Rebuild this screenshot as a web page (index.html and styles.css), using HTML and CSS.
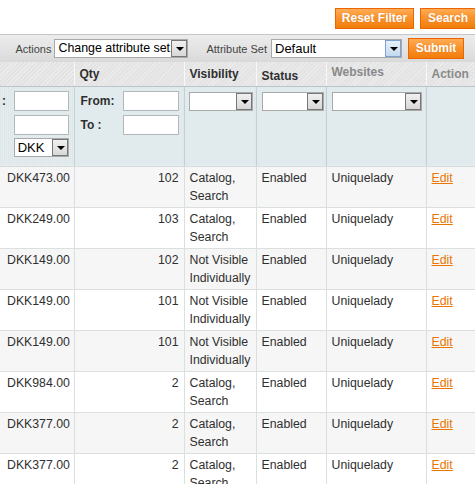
FILE: index.html
```html
<!DOCTYPE html>
<html>
<head>
<meta charset="utf-8">
<link rel="stylesheet" href="styles.css">
</head>
<body>
<div class="page">
  <div class="topbar">
    <button class="btn btn-reset">Reset Filter</button>
    <button class="btn btn-search">Search</button>
  </div>
  <div class="massaction">
    <span class="ma-label">Actions</span>
    <span class="sel sel-actions"><span class="sel-text">Change attribute set</span><span class="arrow"></span></span>
    <span class="ma-label ma-label-set">Attribute Set</span>
    <span class="sel sel-set"><span class="sel-text">Default</span><span class="arrow arrow-hot"></span></span>
    <button class="btn btn-submit">Submit</button>
  </div>
  <table class="grid">
    <colgroup>
      <col class="c-price"><col class="c-qty"><col class="c-vis"><col class="c-status"><col class="c-web"><col class="c-action">
    </colgroup>
    <thead>
      <tr class="headings">
        <th></th>
        <th>Qty</th>
        <th>Visibility</th>
        <th><span class="th-status">Status</span></th>
        <th class="th-muted"><span class="th-web">Websites</span></th>
        <th class="th-muted">Action</th>
      </tr>
      <tr class="filter">
        <th>
          <div class="range">
            <div class="range-row"><span class="range-label price-label">:</span><span class="inp"></span></div>
            <div class="range-row"><span class="range-label price-label"></span><span class="inp"></span></div>
            <div class="range-row"><span class="range-label price-label"></span><span class="sel sel-cur"><span class="sel-text">DKK</span><span class="arrow"></span></span></div>
          </div>
        </th>
        <th>
          <div class="range">
            <div class="range-row"><span class="range-label qty-label">From:</span><span class="inp"></span></div>
            <div class="range-row"><span class="range-label qty-label">To :</span><span class="inp"></span></div>
          </div>
        </th>
        <th><span class="sel sel-vis"><span class="sel-text"></span><span class="arrow"></span></span></th>
        <th><span class="sel sel-status"><span class="sel-text"></span><span class="arrow"></span></span></th>
        <th><span class="sel sel-web"><span class="sel-text"></span><span class="arrow"></span></span></th>
        <th></th>
      </tr>
    </thead>
    <tbody>
      <tr class="odd"><td>DKK473.00</td><td class="num">102</td><td>Catalog, Search</td><td>Enabled</td><td>Uniquelady</td><td><a href="#">Edit</a></td></tr>
      <tr><td>DKK249.00</td><td class="num">103</td><td>Catalog, Search</td><td>Enabled</td><td>Uniquelady</td><td><a href="#">Edit</a></td></tr>
      <tr class="odd"><td>DKK149.00</td><td class="num">102</td><td>Not Visible Individually</td><td>Enabled</td><td>Uniquelady</td><td><a href="#">Edit</a></td></tr>
      <tr><td>DKK149.00</td><td class="num">101</td><td>Not Visible Individually</td><td>Enabled</td><td>Uniquelady</td><td><a href="#">Edit</a></td></tr>
      <tr class="odd"><td>DKK149.00</td><td class="num">101</td><td>Not Visible Individually</td><td>Enabled</td><td>Uniquelady</td><td><a href="#">Edit</a></td></tr>
      <tr><td>DKK984.00</td><td class="num">2</td><td>Catalog, Search</td><td>Enabled</td><td>Uniquelady</td><td><a href="#">Edit</a></td></tr>
      <tr class="odd"><td>DKK377.00</td><td class="num">2</td><td>Catalog, Search</td><td>Enabled</td><td>Uniquelady</td><td><a href="#">Edit</a></td></tr>
      <tr><td>DKK377.00</td><td class="num">2</td><td>Catalog, Search</td><td>Enabled</td><td>Uniquelady</td><td><a href="#">Edit</a></td></tr>
    </tbody>
  </table>
</div>
</body>
</html>
```
FILE: styles.css
```css
html, body {
  margin: 0;
  padding: 0;
  background: #ffffff;
  overflow: hidden;
}
.page {
  width: 475px;
  height: 484px;
  overflow: hidden;
  font-family: "Liberation Sans", Arial, sans-serif;
  font-size: 12px;
  color: #2f2f2f;
}
.topbar {
  height: 34px;
  display: flex;
  justify-content: flex-end;
  align-items: flex-start;
  gap: 6px;
  padding-top: 8px;
  box-sizing: border-box;
  margin-right: -1px;
}
.btn {
  font-family: "Liberation Sans", Arial, sans-serif;
  font-weight: bold;
  font-size: 12px;
  color: #ffffff;
  height: 21px;
  padding: 0;
  border: 1px solid #ed6502;
  background: linear-gradient(to bottom, #ffac55 0%, #fb9530 40%, #f07d0a 100%);
  text-shadow: 0 0 1px rgba(180, 70, 0, 0.4);
  line-height: 19px;
  box-sizing: border-box;
  cursor: pointer;
}
.btn-reset { width: 79px; }
.btn-search { width: 56px; }
.btn-submit { width: 56px; height: 21px; margin-left: 6px; }
.massaction {
  height: 28px;
  box-sizing: border-box;
  border-top: 1px solid #c6c6c6;
  background: linear-gradient(to bottom, #ececec 0%, #e2e2e2 60%, #d9d9d9 100%);
  display: flex;
  align-items: center;
  justify-content: flex-end;
  padding-right: 11px;
}
.ma-label {
  font-size: 11px;
  color: #444444;
  margin-right: 3px;
}
.ma-label-set { margin-left: 18px; margin-right: 4px; }
.sel {
  display: inline-flex;
  align-items: stretch;
  background: #ffffff;
  border: 1px solid #a9a9a9;
  box-sizing: border-box;
  height: 19px;
  overflow: hidden;
}
.sel-text {
  flex: 1;
  min-width: 0;
  overflow: hidden;
  white-space: nowrap;
  font-size: 13px;
  font-weight: normal;
  line-height: 17px;
  padding-left: 3px;
  color: #000000;
}
.sel-actions .sel-text { font-size: 12.4px; }
.arrow {
  width: 16px;
  flex: none;
  box-sizing: border-box;
  border: 1px solid #777777;
  background: linear-gradient(to bottom, #f0f0f0, #d8d8d8);
  position: relative;
}
.arrow::after {
  content: "";
  position: absolute;
  left: 4px;
  top: 6px;
  border-left: 4px solid transparent;
  border-right: 4px solid transparent;
  border-top: 4px solid #000000;
}
.arrow-hot {
  border-color: #7da2ce;
  background: linear-gradient(to bottom, #e6f0fa, #c4d9ef);
}
.sel-actions { width: 134px; }
.sel-set { width: 131px; }
.grid {
  width: 475px;
  table-layout: fixed;
  border-collapse: collapse;
  border-spacing: 0;
}
.c-price { width: 74px; }
.c-qty { width: 110px; }
.c-vis { width: 72px; }
.c-status { width: 70px; }
.c-web { width: 100px; }
.c-action { width: 49px; }
.headings th {
  height: 24px;
  padding: 0 5px;
  text-align: left;
  vertical-align: middle;
  font-weight: bold;
  font-size: 12px;
  color: #2f2f2f;
  border-right: 1px solid #f8f8f8;
  border-bottom: 1px solid #b8c4c6;
  background-color: #e5e5e5;
  background-image: repeating-linear-gradient(135deg, #ececec 0px, #ececec 1px, #e3e3e3 1px, #e3e3e3 3px);
  white-space: nowrap;
  box-sizing: border-box;
}
.headings .th-muted { color: #8a8a8a; }
.th-status { position: relative; top: 2px; }
.th-web { position: relative; top: -2px; }
.filter th {
  height: 80px;
  padding: 4px 5px 0 5px;
  vertical-align: top;
  text-align: left;
  border-right: 1px solid #c3d1d4;
  border-bottom: 1px solid #d6dcdd;
  background-color: #e0e9eb;
  background-image:
    repeating-linear-gradient(0deg, rgba(255,255,255,0.25) 0px, rgba(255,255,255,0.25) 1px, transparent 1px, transparent 2px),
    repeating-linear-gradient(90deg, rgba(200,214,217,0.25) 0px, rgba(200,214,217,0.25) 1px, transparent 1px, transparent 2px);
  box-sizing: border-box;
}
.filter th:first-child { padding-left: 0; }
.range {
  display: flex;
  flex-direction: column;
  gap: 4px;
}
.range-row {
  display: flex;
  align-items: flex-start;
}
.range-label {
  font-weight: bold;
  font-size: 12px;
  color: #2f2f2f;
  line-height: 20px;
}
.price-label { width: 14px; padding-left: 2px; box-sizing: border-box; }
.qty-label { width: 43px; padding-left: 1px; }
.inp {
  display: block;
  width: 56px;
  height: 20px;
  box-sizing: border-box;
  background: #ffffff;
  border: 1px solid #b0b8ba;
}
.sel-cur { width: 56px; margin-top: -1px; }
.sel-vis { width: 64px; margin-left: -1px; margin-top: 1px; }
.sel-status { width: 62px; margin-top: 1px; }
.sel-web { width: 90px; margin-top: 1px; }
tbody td {
  height: 41px;
  padding: 2px 5px;
  box-sizing: border-box;
  vertical-align: top;
  font-size: 12.3px;
  line-height: 18px;
  color: #2f2f2f;
  border-right: 1px solid #dadfe0;
  border-bottom: 1px solid #dadfe0;
  background: #ffffff;
}
tbody td:first-child { padding-left: 7px; }
tbody tr.odd td { background: #f6f6f6; }
tbody td.num { text-align: right; }
tbody a {
  color: #ea7601;
  text-decoration: underline;
}
```
